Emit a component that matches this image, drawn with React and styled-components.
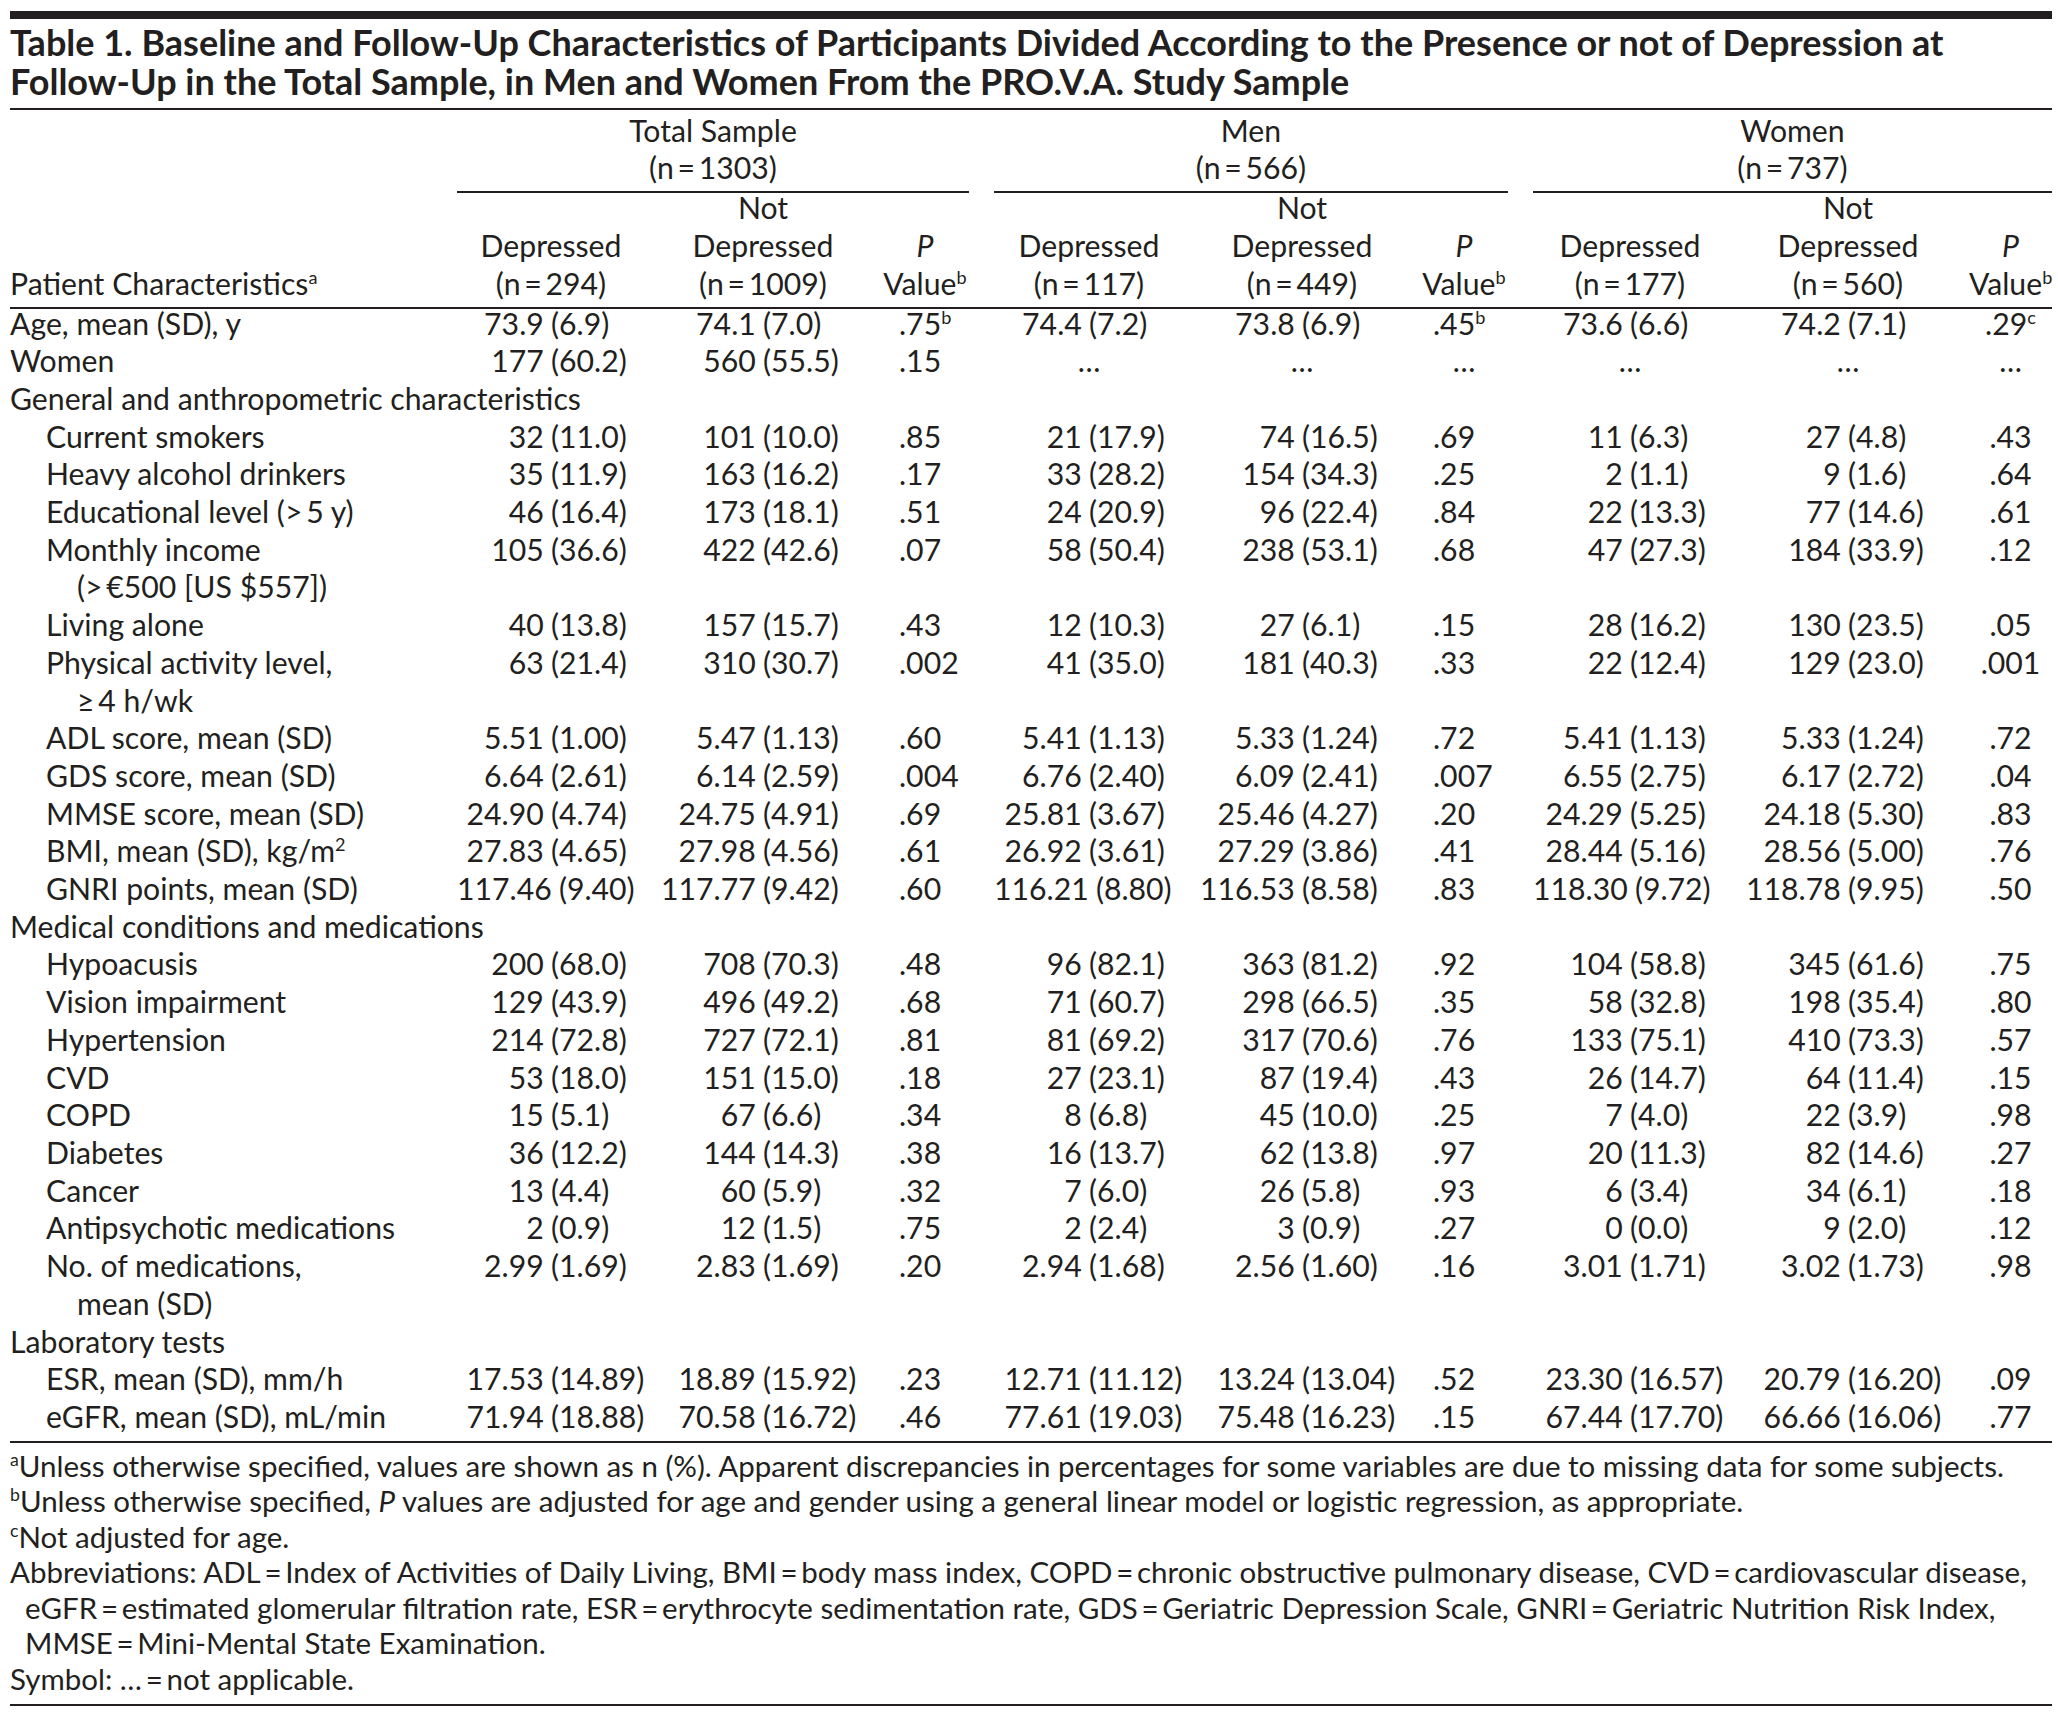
import React from 'react';
import styled, { createGlobalStyle } from 'styled-components';

const FONT = `'Lato', 'Open Sans', sans-serif`;
const INK = '#231f20';
const TS = '\u2009';

const GlobalStyle = createGlobalStyle`
  html, body {
    margin: 0;
    padding: 0;
    background: #ffffff;
  }
  body {
    font-family: ${FONT};
    color: ${INK};
  }
`;

const Page = styled.div`
  width: 2042px;
  padding: 11px 6px 0 10px;
  font-family: ${FONT};
  font-size: 30.2px;
  color: ${INK};
`;

const TopRule = styled.div`
  height: 8px;
  background: ${INK};
`;

const Title = styled.h1`
  margin: 0;
  padding: 4px 0 7px;
  font-size: 36px;
  line-height: 39px;
  font-weight: 700;
  white-space: nowrap;
  border-bottom: 2px solid ${INK};
`;

const Row = styled.div`
  display: flex;
  align-items: ${p => (p.$bottom ? 'flex-end' : 'flex-start')};
  line-height: 37.7px;
  white-space: nowrap;
`;

const Label = styled.div`
  flex: none;
  width: 447px;
  padding-left: ${p => p.$level * 36 + 31}px;
  text-indent: -31px;
  box-sizing: border-box;
`;

const GroupCells = styled.div`
  flex: none;
  display: grid;
  grid-template-columns: ${p => p.$cols};
  margin-left: ${p => p.$gap}px;
`;

const GroupHead = styled.div`
  flex: none;
  width: ${p => p.$w}px;
  margin-left: ${p => p.$gap}px;
  text-align: center;
  padding: 1.5px 0 4.5px;
  border-bottom: 2px solid ${INK};
`;

const SubHeadRow = styled(Row)`
  margin-top: -4px;
  padding-bottom: 4px;
  border-bottom: 2px solid ${INK};
`;

const HeadCell = styled.div`
  text-align: center;
  align-self: end;
`;

const Body = styled.div`
  margin-top: -4px;
  padding-bottom: 5px;
  border-bottom: 2px solid ${INK};
`;

const ValueCell = styled.div`
  display: grid;
  grid-template-columns: 1fr 1fr;
`;

const ValueNum = styled.span`
  text-align: right;
  padding-right: 0.24em;
`;

const ValueSd = styled.span`
  text-align: left;
`;

const PCell = styled.div`
  text-align: ${p => p.$align};
  padding-left: ${p => p.$pad}px;
`;

const Dots = styled.div`
  text-align: center;
`;

const Sup = styled.sup`
  font-size: 0.6em;
  line-height: 0;
  vertical-align: 0.6em;
`;

const Ital = styled.i`
  font-style: italic;
`;

const Notes = styled.div`
  font-size: 29.5px;
  line-height: 35.5px;
  padding: 5px 0 8px;
  border-bottom: 2px solid ${INK};
  white-space: nowrap;
`;

const NoteLine = styled.div`
  padding-left: ${p => (p.$indent ? 15 : 0)}px;
`;

const groups = [
  { title: 'Total Sample', n: '1303', cols: [188, 236, 88], gap: 0, dep: '294', nd: '1009', pAlign: 'left', pPad: 18 },
  { title: 'Men', n: '566', cols: [190, 236, 88], gap: 25, dep: '117', nd: '449', pAlign: 'left', pPad: 13 },
  { title: 'Women', n: '737', cols: [194, 242, 83], gap: 25, dep: '177', nd: '560', pAlign: 'center', pPad: 0 },
];

const rows = [
  { label: ['Age, mean (SD), y'], level: 0, v: ['73.9 (6.9)', '74.1 (7.0)', '.75^b', '74.4 (7.2)', '73.8 (6.9)', '.45^b', '73.6 (6.6)', '74.2 (7.1)', '.29^c'] },
  { label: ['Women'], level: 0, v: ['177 (60.2)', '560 (55.5)', '.15', '…', '…', '…', '…', '…', '…'] },
  { label: ['General and anthropometric characteristics'], level: 0, section: true },
  { label: ['Current smokers'], level: 1, v: ['32 (11.0)', '101 (10.0)', '.85', '21 (17.9)', '74 (16.5)', '.69', '11 (6.3)', '27 (4.8)', '.43'] },
  { label: ['Heavy alcohol drinkers'], level: 1, v: ['35 (11.9)', '163 (16.2)', '.17', '33 (28.2)', '154 (34.3)', '.25', '2 (1.1)', '9 (1.6)', '.64'] },
  { label: [`Educational level (>${TS}5 y)`], level: 1, v: ['46 (16.4)', '173 (18.1)', '.51', '24 (20.9)', '96 (22.4)', '.84', '22 (13.3)', '77 (14.6)', '.61'] },
  { label: ['Monthly income', `(>${TS}€500 [US $557])`], level: 1, v: ['105 (36.6)', '422 (42.6)', '.07', '58 (50.4)', '238 (53.1)', '.68', '47 (27.3)', '184 (33.9)', '.12'] },
  { label: ['Living alone'], level: 1, v: ['40 (13.8)', '157 (15.7)', '.43', '12 (10.3)', '27 (6.1)', '.15', '28 (16.2)', '130 (23.5)', '.05'] },
  { label: ['Physical activity level,', `≥${TS}4 h/wk`], level: 1, v: ['63 (21.4)', '310 (30.7)', '.002', '41 (35.0)', '181 (40.3)', '.33', '22 (12.4)', '129 (23.0)', '.001'] },
  { label: ['ADL score, mean (SD)'], level: 1, v: ['5.51 (1.00)', '5.47 (1.13)', '.60', '5.41 (1.13)', '5.33 (1.24)', '.72', '5.41 (1.13)', '5.33 (1.24)', '.72'] },
  { label: ['GDS score, mean (SD)'], level: 1, v: ['6.64 (2.61)', '6.14 (2.59)', '.004', '6.76 (2.40)', '6.09 (2.41)', '.007', '6.55 (2.75)', '6.17 (2.72)', '.04'] },
  { label: ['MMSE score, mean (SD)'], level: 1, v: ['24.90 (4.74)', '24.75 (4.91)', '.69', '25.81 (3.67)', '25.46 (4.27)', '.20', '24.29 (5.25)', '24.18 (5.30)', '.83'] },
  { label: ['BMI, mean (SD), kg/m^2'], level: 1, v: ['27.83 (4.65)', '27.98 (4.56)', '.61', '26.92 (3.61)', '27.29 (3.86)', '.41', '28.44 (5.16)', '28.56 (5.00)', '.76'] },
  { label: ['GNRI points, mean (SD)'], level: 1, v: ['117.46 (9.40)', '117.77 (9.42)', '.60', '116.21 (8.80)', '116.53 (8.58)', '.83', '118.30 (9.72)', '118.78 (9.95)', '.50'] },
  { label: ['Medical conditions and medications'], level: 0, section: true },
  { label: ['Hypoacusis'], level: 1, v: ['200 (68.0)', '708 (70.3)', '.48', '96 (82.1)', '363 (81.2)', '.92', '104 (58.8)', '345 (61.6)', '.75'] },
  { label: ['Vision impairment'], level: 1, v: ['129 (43.9)', '496 (49.2)', '.68', '71 (60.7)', '298 (66.5)', '.35', '58 (32.8)', '198 (35.4)', '.80'] },
  { label: ['Hypertension'], level: 1, v: ['214 (72.8)', '727 (72.1)', '.81', '81 (69.2)', '317 (70.6)', '.76', '133 (75.1)', '410 (73.3)', '.57'] },
  { label: ['CVD'], level: 1, v: ['53 (18.0)', '151 (15.0)', '.18', '27 (23.1)', '87 (19.4)', '.43', '26 (14.7)', '64 (11.4)', '.15'] },
  { label: ['COPD'], level: 1, v: ['15 (5.1)', '67 (6.6)', '.34', '8 (6.8)', '45 (10.0)', '.25', '7 (4.0)', '22 (3.9)', '.98'] },
  { label: ['Diabetes'], level: 1, v: ['36 (12.2)', '144 (14.3)', '.38', '16 (13.7)', '62 (13.8)', '.97', '20 (11.3)', '82 (14.6)', '.27'] },
  { label: ['Cancer'], level: 1, v: ['13 (4.4)', '60 (5.9)', '.32', '7 (6.0)', '26 (5.8)', '.93', '6 (3.4)', '34 (6.1)', '.18'] },
  { label: ['Antipsychotic medications'], level: 1, v: ['2 (0.9)', '12 (1.5)', '.75', '2 (2.4)', '3 (0.9)', '.27', '0 (0.0)', '9 (2.0)', '.12'] },
  { label: ['No. of medications,', 'mean (SD)'], level: 1, v: ['2.99 (1.69)', '2.83 (1.69)', '.20', '2.94 (1.68)', '2.56 (1.60)', '.16', '3.01 (1.71)', '3.02 (1.73)', '.98'] },
  { label: ['Laboratory tests'], level: 0, section: true },
  { label: ['ESR, mean (SD), mm/h'], level: 1, v: ['17.53 (14.89)', '18.89 (15.92)', '.23', '12.71 (11.12)', '13.24 (13.04)', '.52', '23.30 (16.57)', '20.79 (16.20)', '.09'] },
  { label: ['eGFR, mean (SD), mL/min'], level: 1, v: ['71.94 (18.88)', '70.58 (16.72)', '.46', '77.61 (19.03)', '75.48 (16.23)', '.15', '67.44 (17.70)', '66.66 (16.06)', '.77'] },
];

// "text^x" -> text with a superscript
const withSup = s => {
  const [main, sup] = s.split('^');
  return sup ? <>{main}<Sup>{sup}</Sup></> : main;
};

const Value = ({ text }) => {
  if (text === '…') return <Dots>…</Dots>;
  const i = text.indexOf(' (');
  return (
    <ValueCell>
      <ValueNum>{text.slice(0, i)}</ValueNum>
      <ValueSd>{text.slice(i + 1)}</ValueSd>
    </ValueCell>
  );
};

const PValue = ({ text, g }) =>
  text === '…' ? <Dots>…</Dots> : <PCell $align={g.pAlign} $pad={g.pPad}>{withSup(text)}</PCell>;

const sum = a => a.reduce((x, y) => x + y, 0);
const tpl = a => a.map(w => `${w}px`).join(' ');

const DataRow = ({ row }) => (
  <Row>
    <Label $level={row.level}>
      {row.label.map((l, i) => (
        <React.Fragment key={i}>
          {i > 0 && <br />}
          {withSup(l)}
        </React.Fragment>
      ))}
    </Label>
    {!row.section &&
      groups.map((g, gi) => (
        <GroupCells key={gi} $cols={tpl(g.cols)} $gap={g.gap}>
          <Value text={row.v[gi * 3]} />
          <Value text={row.v[gi * 3 + 1]} />
          <PValue text={row.v[gi * 3 + 2]} g={g} />
        </GroupCells>
      ))}
  </Row>
);

export default function App() {
  return (
    <>
      <GlobalStyle />
      <Page>
        <TopRule />
        <Title>
          Table 1. Baseline and Follow-Up Characteristics of Participants Divided According to the Presence or not of Depression at
          <br />
          Follow-Up in the Total Sample, in Men and Women From the PRO.V.A. Study Sample
        </Title>

        <Row>
          <Label $level={0} />
          {groups.map((g, gi) => (
            <GroupHead key={gi} $w={sum(g.cols)} $gap={g.gap}>
              {g.title}
              <br />
              (n{TS}={TS}{g.n})
            </GroupHead>
          ))}
        </Row>

        <SubHeadRow $bottom>
          <Label $level={0}>
            Patient Characteristics<Sup>a</Sup>
          </Label>
          {groups.map((g, gi) => (
            <GroupCells key={gi} $cols={tpl(g.cols)} $gap={g.gap}>
              <HeadCell>
                Depressed
                <br />
                (n{TS}={TS}{g.dep})
              </HeadCell>
              <HeadCell>
                Not
                <br />
                Depressed
                <br />
                (n{TS}={TS}{g.nd})
              </HeadCell>
              <HeadCell>
                <Ital>P</Ital>
                <br />
                Value<Sup>b</Sup>
              </HeadCell>
            </GroupCells>
          ))}
        </SubHeadRow>

        <Body>
          {rows.map((r, i) => (
            <DataRow key={i} row={r} />
          ))}
        </Body>

        <Notes>
          <NoteLine>
            <Sup>a</Sup>Unless otherwise specified, values are shown as n (%). Apparent discrepancies in percentages for some variables are due to missing data for some subjects.
          </NoteLine>
          <NoteLine>
            <Sup>b</Sup>Unless otherwise specified, <Ital>P</Ital> values are adjusted for age and gender using a general linear model or logistic regression, as appropriate.
          </NoteLine>
          <NoteLine>
            <Sup>c</Sup>Not adjusted for age.
          </NoteLine>
          <NoteLine>
            Abbreviations: ADL{TS}={TS}Index of Activities of Daily Living, BMI{TS}={TS}body mass index, COPD{TS}={TS}chronic obstructive pulmonary disease, CVD{TS}={TS}cardiovascular disease,
          </NoteLine>
          <NoteLine $indent>
            eGFR{TS}={TS}estimated glomerular filtration rate, ESR{TS}={TS}erythrocyte sedimentation rate, GDS{TS}={TS}Geriatric Depression Scale, GNRI{TS}={TS}Geriatric Nutrition Risk Index,
          </NoteLine>
          <NoteLine $indent>MMSE{TS}={TS}Mini-Mental State Examination.</NoteLine>
          <NoteLine>Symbol: …{TS}={TS}not applicable.</NoteLine>
        </Notes>
      </Page>
    </>
  );
}
